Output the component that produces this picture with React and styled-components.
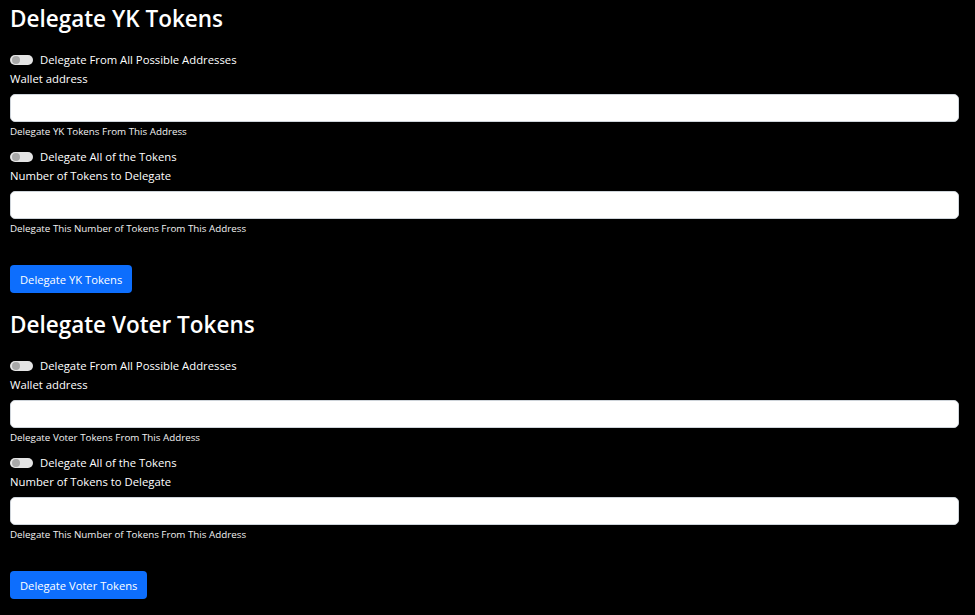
import React, { useState } from 'react'
import styled, { createGlobalStyle } from 'styled-components'

const GlobalStyle = createGlobalStyle`
    html, body {
        margin: 0;
        padding: 0;
        background: #000;
        color: #fff;
        font-family: "Open Sans", "Noto Sans", sans-serif;
    }
    * { box-sizing: border-box; }
`

const Page = styled.div`
    padding: 4px 16px 0 10px;
    min-height: 615px;
    background: #000;
`

const Section = styled.form`
    display: flex;
    flex-direction: column;
    margin-bottom: 17px;
`

const Title = styled.h2`
    margin: 0 0 16px;
    font-size: 22.5px;
    line-height: 30px;
    font-weight: 600;
`

const SwitchRow = styled.label`
    display: flex;
    align-items: center;
    gap: 7px;
    height: 19px;
    font-size: 11.3px;
    margin-top: ${p => p.$top || 0}px;
    cursor: pointer;
`

const Track = styled.span`
    position: relative;
    width: 23px;
    height: 10px;
    border-radius: 6px;
    background: ${p => p.$on ? '#0d6efd' : '#e4e4e4'};
    flex-shrink: 0;
    &::after {
        content: '';
        position: absolute;
        top: 1px;
        left: ${p => p.$on ? '14px' : '2px'};
        width: 8px;
        height: 8px;
        border-radius: 50%;
        background: ${p => p.$on ? '#fff' : '#a8a8a8'};
    }
`

const Label = styled.div`
    font-size: 11.3px;
    line-height: 19px;
    margin-bottom: 6px;
`

const Input = styled.input`
    width: 100%;
    height: 28px;
    border: 1px solid #ced4da;
    border-radius: 5px;
    background: #fff;
    padding: 0 8px;
    font-family: inherit;
    font-size: 11.3px;
    outline: none;
`

const Help = styled.div`
    font-size: 9.8px;
    line-height: 16px;
    margin-top: 2px;
    color: #f2f2f2;
`

const Button = styled.button`
    align-self: flex-start;
    margin-top: 28px;
    height: 28px;
    padding: 0 10px;
    border: none;
    border-radius: 4px;
    background: #0d6efd;
    color: #fff;
    font-family: inherit;
    font-size: 11.2px;
    cursor: pointer;
`

function DelegateForm({ title, token }) {
    const [allAddresses, setAllAddresses] = useState(false)
    const [allTokens, setAllTokens] = useState(false)
    return (
        <Section onSubmit={e => e.preventDefault()}>
            <Title>{title}</Title>
            <SwitchRow onClick={() => setAllAddresses(!allAddresses)}>
                <Track $on={allAddresses} />
                Delegate From All Possible Addresses
            </SwitchRow>
            <Label>Wallet address</Label>
            <Input type="text" />
            <Help>Delegate {token} Tokens From This Address</Help>
            <SwitchRow $top={7} onClick={() => setAllTokens(!allTokens)}>
                <Track $on={allTokens} />
                Delegate All of the Tokens
            </SwitchRow>
            <Label>Number of Tokens to Delegate</Label>
            <Input type="text" />
            <Help>Delegate This Number of Tokens From This Address</Help>
            <Button type="submit">Delegate {token} Tokens</Button>
        </Section>
    )
}

export default function App() {
    return (
        <Page>
            <GlobalStyle />
            <DelegateForm title="Delegate YK Tokens" token="YK" />
            <DelegateForm title="Delegate Voter Tokens" token="Voter" />
        </Page>
    )
}
